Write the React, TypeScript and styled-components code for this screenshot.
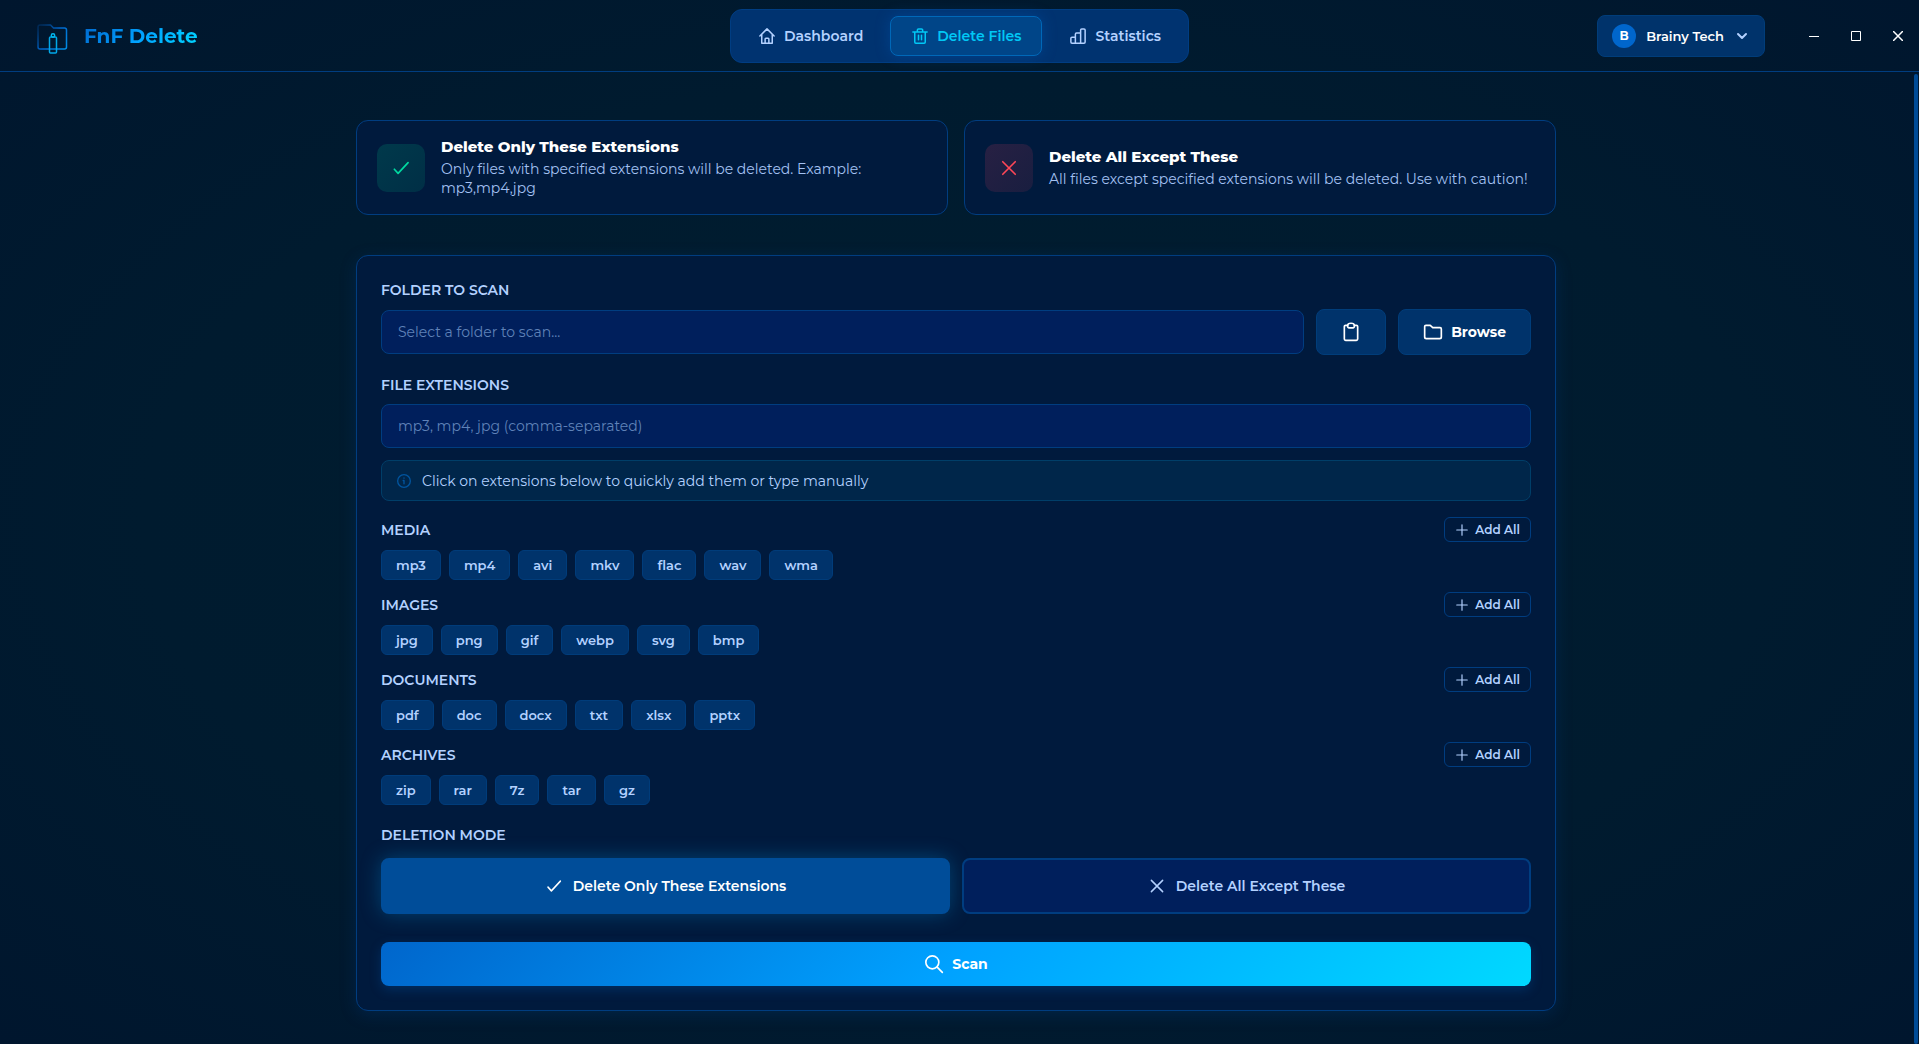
import React, { useState } from "react";
import styled, { createGlobalStyle, css } from "styled-components";

const color = {
  text: "#ffffff",
  soft: "#b3d1ff",
  muted: "#5f82b8",
  border: "#003d80",
  panel: "#001a3d",
  field: "#001f5c",
  chip: "#00336b",
  accent: "#00c8f5",
};

const GlobalStyle = createGlobalStyle`
  *, *::before, *::after { box-sizing: border-box; }
  body {
    margin: 0;
    background: #001a2e;
    color: ${color.text};
    font-family: Montserrat, Inter, "Open Sans", sans-serif;
    font-size: 14px;
  }
  button, input { font: inherit; color: inherit; }
  button { cursor: pointer; margin: 0; }
  h1, h2, p { margin: 0; }
`;

const Page = styled.div`
  min-height: 100vh;
  display: flex;
  flex-direction: column;
  background: radial-gradient(ellipse at center, #001e30 0%, #001b2f 60%, #00162e 100%);
`;

const Header = styled.header`
  display: grid;
  grid-template-columns: 1fr auto 1fr;
  align-items: center;
  height: 72px;
  border-bottom: 1px solid ${color.border};
`;

const Brand = styled.div`
  display: flex;
  align-items: center;
  gap: 16px;
  padding-left: 36px;
`;

const BrandName = styled.h1`
  font-size: 20px;
  line-height: 28px;
  font-weight: 700;
  color: transparent;
  background: linear-gradient(135deg, #0066cc, #00a2ff 50%, #00d9ff);
  background-clip: text;
`;

const Nav = styled.nav`
  display: flex;
  gap: 6px;
  padding: 6px;
  border: 1px solid #003d82;
  border-radius: 12px;
  background: #003370;
`;

const NavItem = styled.button<{ $active?: boolean }>`
  display: flex;
  align-items: center;
  gap: 8px;
  height: 40px;
  padding: 0 20px;
  border: 1px solid transparent;
  border-radius: 8px;
  background: none;
  color: ${color.soft};
  font-size: 14px;
  font-weight: 600;
  ${(p) =>
    p.$active &&
    css`
      color: ${color.accent};
      background: #004588;
      border-color: #0068b8;
      box-shadow: 0 0 15px rgba(0, 102, 204, 0.3);
    `}
`;

const HeaderEnd = styled.div`
  display: flex;
  align-items: center;
  justify-content: flex-end;
  gap: 28px;
`;

const UserButton = styled.button`
  display: flex;
  align-items: center;
  gap: 10px;
  height: 42px;
  padding: 0 14px;
  border: 1px solid #003d7a;
  border-radius: 8px;
  background: ${color.chip};
  font-size: 13px;
  font-weight: 600;
  svg { color: ${color.soft}; }
`;

const Avatar = styled.span`
  display: grid;
  place-items: center;
  width: 24px;
  height: 24px;
  border-radius: 50%;
  background: #0066cc;
  font-size: 12px;
  font-weight: 700;
`;

const WindowControls = styled.div`
  display: flex;
`;

const WindowButton = styled.button`
  display: grid;
  place-items: center;
  width: 42px;
  height: 42px;
  padding: 0;
  border: 0;
  background: none;
`;

const Body = styled.div`
  display: flex;
  flex: 1;
`;

const Main = styled.main`
  flex: 1;
  padding: 48px 24px 32px;
`;

const Content = styled.div`
  max-width: 1200px;
  margin: 0 auto;
`;

const ScrollTrack = styled.div`
  width: 7px;
  padding: 2px 1px 0 2px;
  display: flex;
`;

const ScrollThumb = styled.div`
  flex: 1;
  border-radius: 3px;
  background: #004b96;
`;

const InfoCards = styled.section`
  display: grid;
  grid-template-columns: 1fr 1fr;
  gap: 16px;
  margin-bottom: 40px;
`;

const InfoCard = styled.article`
  display: flex;
  align-items: center;
  gap: 16px;
  padding: 16px 20px;
  border: 1px solid ${color.border};
  border-radius: 12px;
  background: ${color.panel};
`;

const InfoIcon = styled.div<{ $tone: "ok" | "danger" }>`
  display: grid;
  place-items: center;
  flex: none;
  width: 48px;
  height: 48px;
  border-radius: 10px;
  color: ${(p) => (p.$tone === "ok" ? "#00d9a0" : "#ff4757")};
  background: ${(p) =>
    p.$tone === "ok"
      ? "linear-gradient(135deg, #00394b, #002f46)"
      : "linear-gradient(135deg, #272043, #191e40)"};
`;

const InfoText = styled.div`
  display: flex;
  flex-direction: column;
  gap: 4px;
`;

const InfoTitle = styled.h2`
  font-size: 15px;
  line-height: 19px;
  font-weight: 800;
`;

const InfoDescription = styled.p`
  color: #a3c1f2;
  font-size: 14px;
  line-height: 19px;
`;

const Panel = styled.form`
  padding: 24px;
  border: 1px solid ${color.border};
  border-radius: 12px;
  background: ${color.panel};
  box-shadow: 0 4px 16px rgba(0, 61, 128, 0.3);
`;

const Field = styled.div`
  margin-bottom: 20px;
`;

const labelText = css`
  display: block;
  margin-bottom: 8px;
  padding: 0;
  color: ${color.soft};
  font-size: 14px;
  line-height: 21px;
  font-weight: 600;
`;

const Label = styled.label`
  ${labelText}
`;

const InputRow = styled.div`
  display: flex;
  align-items: center;
  gap: 12px;
`;

const TextInput = styled.input`
  flex: 1;
  display: block;
  width: 100%;
  min-width: 0;
  height: 44px;
  padding: 0 16px;
  border: 1px solid ${color.border};
  border-radius: 8px;
  outline: none;
  background: ${color.field};
  font-size: 14px;
  &::placeholder { color: ${color.muted}; opacity: 1; }
`;

const ToolButton = styled.button`
  display: flex;
  align-items: center;
  justify-content: center;
  gap: 8px;
  height: 46px;
  padding: 0 24px;
  border: 1px solid #003d7a;
  border-radius: 8px;
  background: ${color.chip};
  font-size: 14px;
  font-weight: 700;
`;

const Hint = styled.p`
  display: flex;
  align-items: center;
  gap: 10px;
  height: 41px;
  margin: 12px 0 16px;
  padding: 0 14px;
  border: 1px solid #003e68;
  border-radius: 8px;
  background: #00264a;
  color: ${color.soft};
  font-size: 14px;
  svg { color: #00559f; }
`;

const Groups = styled.div`
  display: flex;
  flex-direction: column;
  gap: 12px;
`;

const GroupHead = styled.div`
  display: flex;
  align-items: center;
  justify-content: space-between;
  height: 25px;
  margin-bottom: 8px;
  color: ${color.soft};
`;

const GroupName = styled.h2`
  font-size: 14px;
  font-weight: 600;
`;

const AddAll = styled.button`
  display: flex;
  align-items: center;
  gap: 6px;
  height: 25px;
  padding: 0 10px;
  border: 1px solid ${color.border};
  border-radius: 6px;
  background: transparent;
  font-size: 12px;
  font-weight: 600;
`;

const Chips = styled.div`
  display: flex;
  flex-wrap: wrap;
  gap: 8px;
`;

const Chip = styled.button`
  height: 30px;
  padding: 0 14px;
  border: 1px solid #003c7a;
  border-radius: 6px;
  background: ${color.chip};
  color: ${color.soft};
  font-size: 13px;
  font-weight: 600;
`;

const ModeField = styled.fieldset`
  margin: 0 0 28px;
  padding: 0;
  border: 0;
`;

const Legend = styled.legend`
  ${labelText}
  margin-bottom: 12px;
`;

const Modes = styled.div`
  display: grid;
  grid-template-columns: 1fr 1fr;
  gap: 12px;
`;

const ModeButton = styled.button<{ $active?: boolean }>`
  display: flex;
  align-items: center;
  justify-content: center;
  gap: 10px;
  height: 56px;
  border: 2px solid ${(p) => (p.$active ? "#004d99" : color.border)};
  border-radius: 8px;
  background: ${(p) => (p.$active ? "#004d99" : color.field)};
  color: ${(p) => (p.$active ? color.text : color.soft)};
  box-shadow: ${(p) => (p.$active ? "0 0 20px rgba(0, 130, 200, 0.4)" : "none")};
  font-size: 14px;
  font-weight: 600;
`;

const ScanButton = styled.button`
  display: flex;
  align-items: center;
  justify-content: center;
  gap: 8px;
  width: 100%;
  height: 44px;
  border: 0;
  border-radius: 8px;
  background: linear-gradient(135deg, #0066cc 0%, #00a2ff 50%, #00d9ff 100%);
  box-shadow: 0 4px 12px rgba(0, 102, 204, 0.25);
  font-size: 14px;
  font-weight: 700;
`;

type IconProps = { size?: number; width?: number; children: React.ReactNode };

const Icon = ({ size = 18, width = 2, children }: IconProps) => (
  <svg
    width={size}
    height={size}
    viewBox="0 0 24 24"
    fill="none"
    stroke="currentColor"
    strokeWidth={width}
    strokeLinecap="round"
    strokeLinejoin="round"
    aria-hidden="true"
  >
    {children}
  </svg>
);

const HouseIcon = () => (
  <Icon>
    <path d="M2.5 12 12 2.5 21.5 12M5 10v11.5h14V10M9.500 21.500v-5.500a1 1 0 0 1 1-1h3a1 1 0 0 1 1 1v5.500" />
  </Icon>
);
const TrashIcon = () => (
  <Icon>
    <path d="M2.500 6.500h19M5 6.500v13.500a1.500 1.500 0 0 0 1.500 1.500h11a1.500 1.500 0 0 0 1.500-1.500V6.500M8.500 6V4a1.500 1.500 0 0 1 1.500-1.500h4A1.500 1.500 0 0 1 15.500 4v2M10 11v6M14 11v6" />
  </Icon>
);
const StatsIcon = () => (
  <Icon>
    <path d="M8.500 21.500H4A1.500 1.500 0 0 1 2.500 20v-5A1.500 1.500 0 0 1 4 13.500h4.500M8.500 21.500V9.500A1.500 1.500 0 0 1 10 8h5.500M8.500 21.500h7M15.500 21.500V4A1.500 1.500 0 0 1 17 2.500h3A1.500 1.500 0 0 1 21.500 4v16a1.500 1.500 0 0 1-1.500 1.500h-4.500" />
  </Icon>
);
const CheckIcon = ({ size = 20 }: { size?: number }) => (
  <Icon size={size}>
    <path d="M4 13.500 8.500 18.500 20.500 5.500" />
  </Icon>
);
const CrossIcon = ({ size = 20 }: { size?: number }) => (
  <Icon size={size}>
    <path d="M4.500 4.500l15 15M19.500 4.500l-15 15" />
  </Icon>
);
const ClipboardIcon = () => (
  <Icon size={20}>
    <path d="M8 4H5.500A1.500 1.500 0 0 0 4 5.500v15A1.500 1.500 0 0 0 5.500 22h13a1.500 1.500 0 0 0 1.500-1.500v-15A1.500 1.500 0 0 0 18.500 4H16" />
    <path d="M8 4a4 2.500 0 0 1 8 0v1.500a1.500 1.500 0 0 1-1.500 1.500h-5A1.500 1.500 0 0 1 8 5.500z" />
  </Icon>
);
const FolderIcon = () => (
  <Icon size={20}>
    <path d="M2 18V5.500A1.500 1.500 0 0 1 3.500 4h5.200l3 2.800h8.800A1.500 1.500 0 0 1 22 8.300V18a2 2 0 0 1-2 2H4a2 2 0 0 1-2-2z" />
  </Icon>
);
const InfoGlyph = () => (
  <Icon size={16}>
    <circle cx="12" cy="12" r="9.500" />
    <path d="M10.800 11.200H12v5M12 7.500v.2" />
  </Icon>
);
const PlusIcon = () => (
  <Icon size={14} width={2}>
    <path d="M12 3v18M3 12h18" />
  </Icon>
);
const SearchIcon = () => (
  <Icon size={20}>
    <circle cx="10" cy="10" r="7.800" />
    <path d="m15.800 15.800 6.200 6.200" />
  </Icon>
);
const ChevronIcon = () => (
  <Icon size={16} width={3}>
    <path d="m6 9 6 6 6-6" />
  </Icon>
);

const Logo = () => (
  <svg width="32" height="36" viewBox="0 0 32 36" fill="none" aria-hidden="true">
    <defs>
      <linearGradient id="folder" x1="2" y1="6" x2="31" y2="31" gradientUnits="userSpaceOnUse">
        <stop offset="0" stopColor="#003d80" stopOpacity="0.4" />
        <stop offset="0.5" stopColor="#0066cc" />
        <stop offset="1" stopColor="#0090e8" />
      </linearGradient>
    </defs>
    <path
      d="M2 9a2 2 0 0 1 2-2h10.500l3 3h11a2 2 0 0 1 2 2v17a2 2 0 0 1-2 2H4a2 2 0 0 1-2-2V9"
      stroke="url(#folder)"
      strokeWidth="1.500"
    />
    <rect x="13.500" y="19" width="7" height="16" rx="1" stroke="#00a8e8" strokeWidth="1.500" />
    <circle cx="17" cy="17.500" r="1.700" stroke="#00b8f0" strokeWidth="1.500" />
  </svg>
);

const groups = [
  { name: "MEDIA", items: ["mp3", "mp4", "avi", "mkv", "flac", "wav", "wma"] },
  { name: "IMAGES", items: ["jpg", "png", "gif", "webp", "svg", "bmp"] },
  { name: "DOCUMENTS", items: ["pdf", "doc", "docx", "txt", "xlsx", "pptx"] },
  { name: "ARCHIVES", items: ["zip", "rar", "7z", "tar", "gz"] },
];

export default function App() {
  const [extensions, setExtensions] = useState<string[]>([]);
  const [text, setText] = useState("");
  const [mode, setMode] = useState<"only" | "except">("only");

  const add = (items: string[]) => {
    const next = Array.from(new Set([...extensions, ...items]));
    setExtensions(next);
    setText(next.join(", "));
  };

  return (
    <>
      <GlobalStyle />
      <Page>
        <Header>
          <Brand>
            <Logo />
            <BrandName>FnF Delete</BrandName>
          </Brand>
          <Nav>
            <NavItem><HouseIcon />Dashboard</NavItem>
            <NavItem $active aria-current="page"><TrashIcon />Delete Files</NavItem>
            <NavItem><StatsIcon />Statistics</NavItem>
          </Nav>
          <HeaderEnd>
            <UserButton>
              <Avatar>B</Avatar>
              Brainy Tech
              <ChevronIcon />
            </UserButton>
            <WindowControls>
              <WindowButton aria-label="Minimize">
                <svg width="10" height="10"><path d="M0 5.500h10" stroke="#fff" /></svg>
              </WindowButton>
              <WindowButton aria-label="Maximize">
                <svg width="10" height="10"><path d="M.5.5h9v9h-9z" stroke="#fff" fill="none" /></svg>
              </WindowButton>
              <WindowButton aria-label="Close">
                <svg width="10" height="10"><path d="m0 0 10 10M10 0 0 10" stroke="#fff" strokeWidth="1.500" /></svg>
              </WindowButton>
            </WindowControls>
          </HeaderEnd>
        </Header>
        <Body>
          <Main>
            <Content>
              <InfoCards>
                <InfoCard>
                  <InfoIcon $tone="ok"><CheckIcon /></InfoIcon>
                  <InfoText>
                    <InfoTitle>Delete Only These Extensions</InfoTitle>
                    <InfoDescription>
                      Only files with specified extensions will be deleted. Example: mp3,mp4,jpg
                    </InfoDescription>
                  </InfoText>
                </InfoCard>
                <InfoCard>
                  <InfoIcon $tone="danger"><CrossIcon /></InfoIcon>
                  <InfoText>
                    <InfoTitle>Delete All Except These</InfoTitle>
                    <InfoDescription>
                      All files except specified extensions will be deleted. Use with caution!
                    </InfoDescription>
                  </InfoText>
                </InfoCard>
              </InfoCards>
              <Panel onSubmit={(e) => e.preventDefault()}>
                <Field>
                  <Label htmlFor="folder-path">FOLDER TO SCAN</Label>
                  <InputRow>
                    <TextInput id="folder-path" placeholder="Select a folder to scan..." />
                    <ToolButton type="button" aria-label="Paste path"><ClipboardIcon /></ToolButton>
                    <ToolButton type="button"><FolderIcon />Browse</ToolButton>
                  </InputRow>
                </Field>
                <Field>
                  <Label htmlFor="extensions">FILE EXTENSIONS</Label>
                  <TextInput
                    id="extensions"
                    value={text}
                    onChange={(e) => setText(e.target.value)}
                    placeholder="mp3, mp4, jpg (comma-separated)"
                  />
                  <Hint>
                    <InfoGlyph />
                    Click on extensions below to quickly add them or type manually
                  </Hint>
                  <Groups>
                    {groups.map((group) => (
                      <section key={group.name}>
                        <GroupHead>
                          <GroupName>{group.name}</GroupName>
                          <AddAll type="button" onClick={() => add(group.items)}>
                            <PlusIcon />Add All
                          </AddAll>
                        </GroupHead>
                        <Chips>
                          {group.items.map((item) => (
                            <Chip type="button" key={item} onClick={() => add([item])}>{item}</Chip>
                          ))}
                        </Chips>
                      </section>
                    ))}
                  </Groups>
                </Field>
                <ModeField>
                  <Legend>DELETION MODE</Legend>
                  <Modes>
                    <ModeButton type="button" $active={mode === "only"} onClick={() => setMode("only")}>
                      <CheckIcon size={18} />Delete Only These Extensions
                    </ModeButton>
                    <ModeButton type="button" $active={mode === "except"} onClick={() => setMode("except")}>
                      <CrossIcon size={18} />Delete All Except These
                    </ModeButton>
                  </Modes>
                </ModeField>
                <ScanButton type="submit"><SearchIcon />Scan</ScanButton>
              </Panel>
            </Content>
          </Main>
          <ScrollTrack><ScrollThumb /></ScrollTrack>
        </Body>
      </Page>
    </>
  );
}
